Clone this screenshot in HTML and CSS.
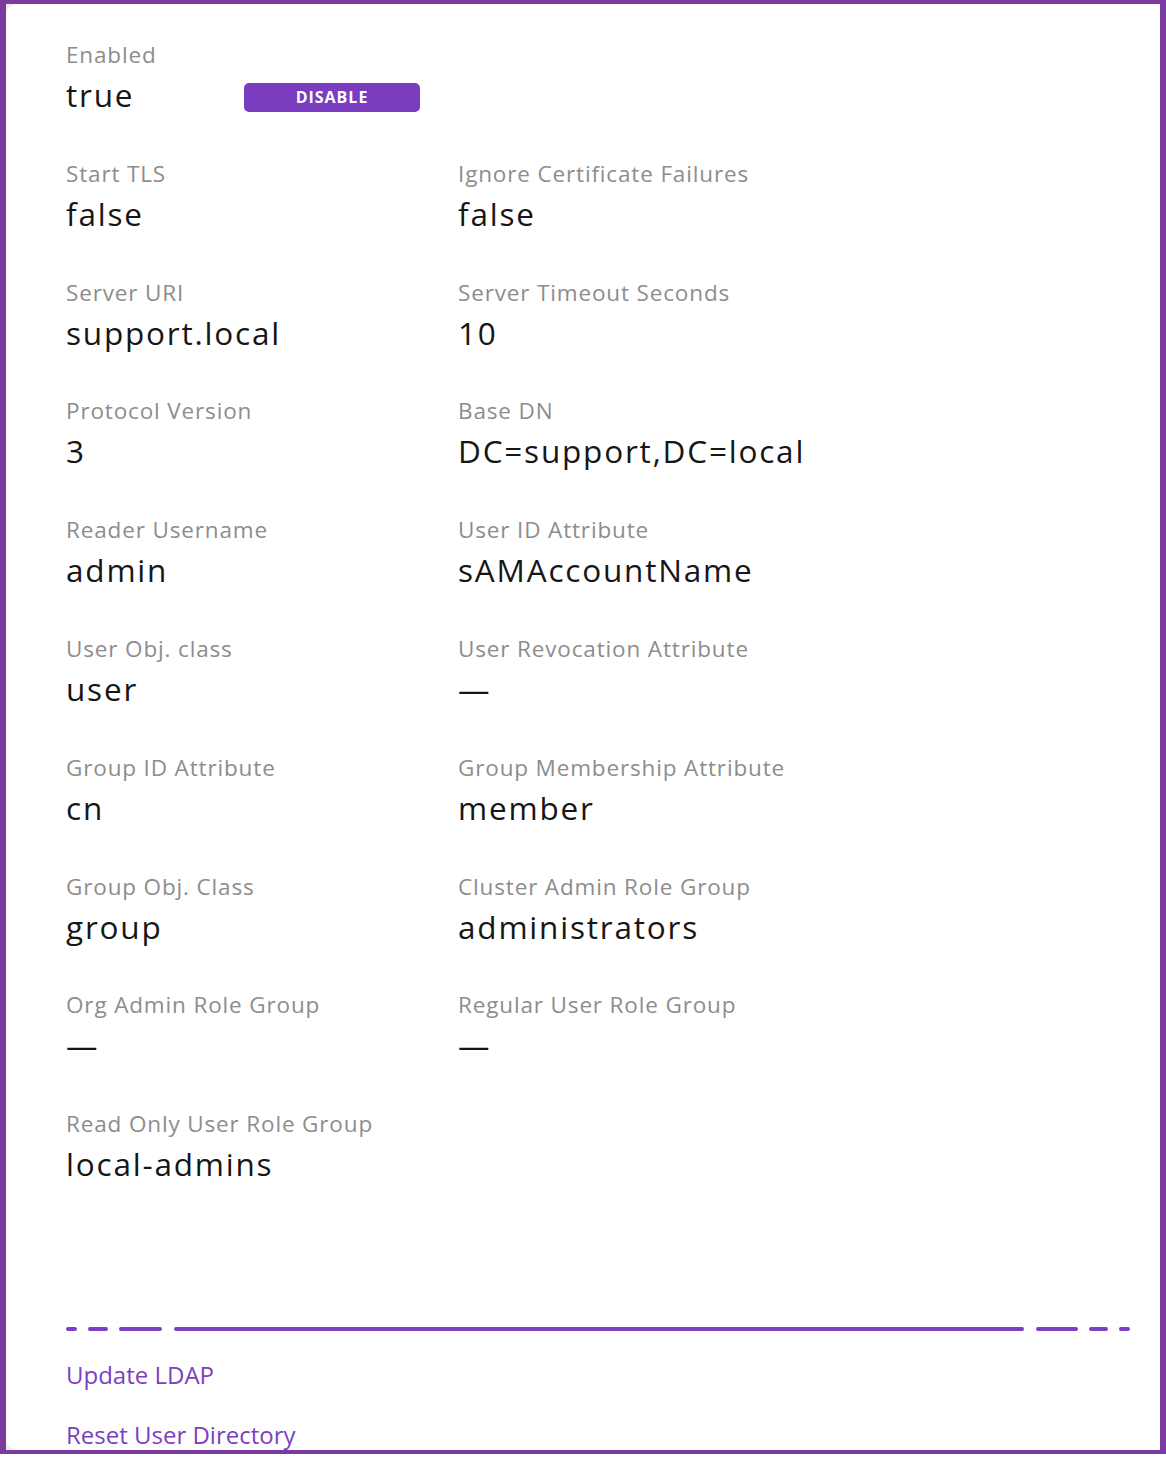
FILE: index.html
```html
<!DOCTYPE html>
<html lang="en">
<head>
<meta charset="utf-8">
<title>LDAP Settings</title>
<link rel="stylesheet" href="styles.css">
</head>
<body>
<div class="frame">
  <div class="card">
    <div class="fields">
      <div class="field">
        <div class="label">Enabled</div>
        <div class="value-row">
          <div class="value value-fixed">true</div>
          <button class="btn" type="button">DISABLE</button>
        </div>
      </div>
      <div class="field"></div>

      <div class="field"><div class="label">Start TLS</div><div class="value">false</div></div>
      <div class="field"><div class="label">Ignore Certificate Failures</div><div class="value">false</div></div>

      <div class="field"><div class="label">Server URI</div><div class="value">support.local</div></div>
      <div class="field"><div class="label">Server Timeout Seconds</div><div class="value">10</div></div>

      <div class="field"><div class="label">Protocol Version</div><div class="value">3</div></div>
      <div class="field"><div class="label">Base DN</div><div class="value">DC=support,DC=local</div></div>

      <div class="field"><div class="label">Reader Username</div><div class="value">admin</div></div>
      <div class="field"><div class="label">User ID Attribute</div><div class="value">sAMAccountName</div></div>

      <div class="field"><div class="label">User Obj. class</div><div class="value">user</div></div>
      <div class="field"><div class="label">User Revocation Attribute</div><div class="value">—</div></div>

      <div class="field"><div class="label">Group ID Attribute</div><div class="value">cn</div></div>
      <div class="field"><div class="label">Group Membership Attribute</div><div class="value">member</div></div>

      <div class="field"><div class="label">Group Obj. Class</div><div class="value">group</div></div>
      <div class="field"><div class="label">Cluster Admin Role Group</div><div class="value">administrators</div></div>

      <div class="field"><div class="label">Org Admin Role Group</div><div class="value">—</div></div>
      <div class="field"><div class="label">Regular User Role Group</div><div class="value">—</div></div>

      <div class="field"><div class="label">Read Only User Role Group</div><div class="value">local-admins</div></div>
    </div>

    <div class="footer">
      <div class="divider">
        <span class="seg s11"></span>
        <span class="seg s20"></span>
        <span class="seg s43"></span>
        <span class="seg long"></span>
        <span class="seg s42"></span>
        <span class="seg s19"></span>
        <span class="seg s11"></span>
      </div>
      <a class="link" href="#">Update LDAP</a>
      <a class="link" href="#">Reset User Directory</a>
    </div>
  </div>
</div>
</body>
</html>
```
FILE: styles.css
```css
html, body {
  margin: 0;
  padding: 0;
  background: #ffffff;
}

body {
  width: 1166px;
  height: 1458px;
  font-family: "Open Sans", "Noto Sans", sans-serif;
}

.frame {
  box-sizing: border-box;
  width: 1166px;
  height: 1454px;
  border-style: solid;
  border-color: #7a3a9e;
  border-width: 4px 6px 4px 6px;
  background: #ececec;
}

.card {
  box-sizing: border-box;
  height: 100%;
  background: #ffffff;
  border-radius: 12px 0 0 12px;
  padding: 36px 0 0 60px;
  display: flex;
  flex-direction: column;
}

.fields {
  display: grid;
  grid-template-columns: 392px 392px;
  row-gap: 43.8px;
}

.field {
  display: flex;
  flex-direction: column;
  min-height: 75px;
}

.label {
  font-size: 22.5px;
  line-height: 28px;
  letter-spacing: 0.85px;
  color: #8d8d8d;
  margin-top: 1px;
  margin-bottom: 6px;
  white-space: nowrap;
}

.value {
  font-size: 31.5px;
  line-height: 40px;
  letter-spacing: 1.8px;
  color: #161616;
  white-space: nowrap;
}

.value-row {
  display: flex;
  align-items: center;
}

.value-fixed {
  width: 178px;
}

.btn {
  width: 176px;
  height: 29px;
  margin-top: 5px;
  padding: 0;
  border: none;
  border-radius: 5px;
  background: #7a3dbf;
  color: #ffffff;
  font-family: "Open Sans", "Noto Sans", sans-serif;
  font-weight: 700;
  font-size: 16px;
  letter-spacing: 1px;
  line-height: 29px;
  text-align: center;
}

.footer {
  margin-top: auto;
  display: flex;
  flex-direction: column;
  align-items: flex-start;
}

.divider {
  display: flex;
  gap: 11.2px;
  width: 1064px;
  height: 4px;
  margin-bottom: 29px;
}

.seg {
  display: block;
  height: 4px;
  border-radius: 2px;
  background: #7b3fc2;
}

.s11 { width: 11px; }
.s20 { width: 20px; }
.s43 { width: 43px; }
.s42 { width: 42px; }
.s19 { width: 19px; }
.long { flex: 1; }

.link {
  font-size: 24px;
  line-height: 30px;
  color: #7b3fc2;
  text-decoration: none;
  margin-bottom: 30px;
}

.link:last-child {
  margin-bottom: 0;
}
```
